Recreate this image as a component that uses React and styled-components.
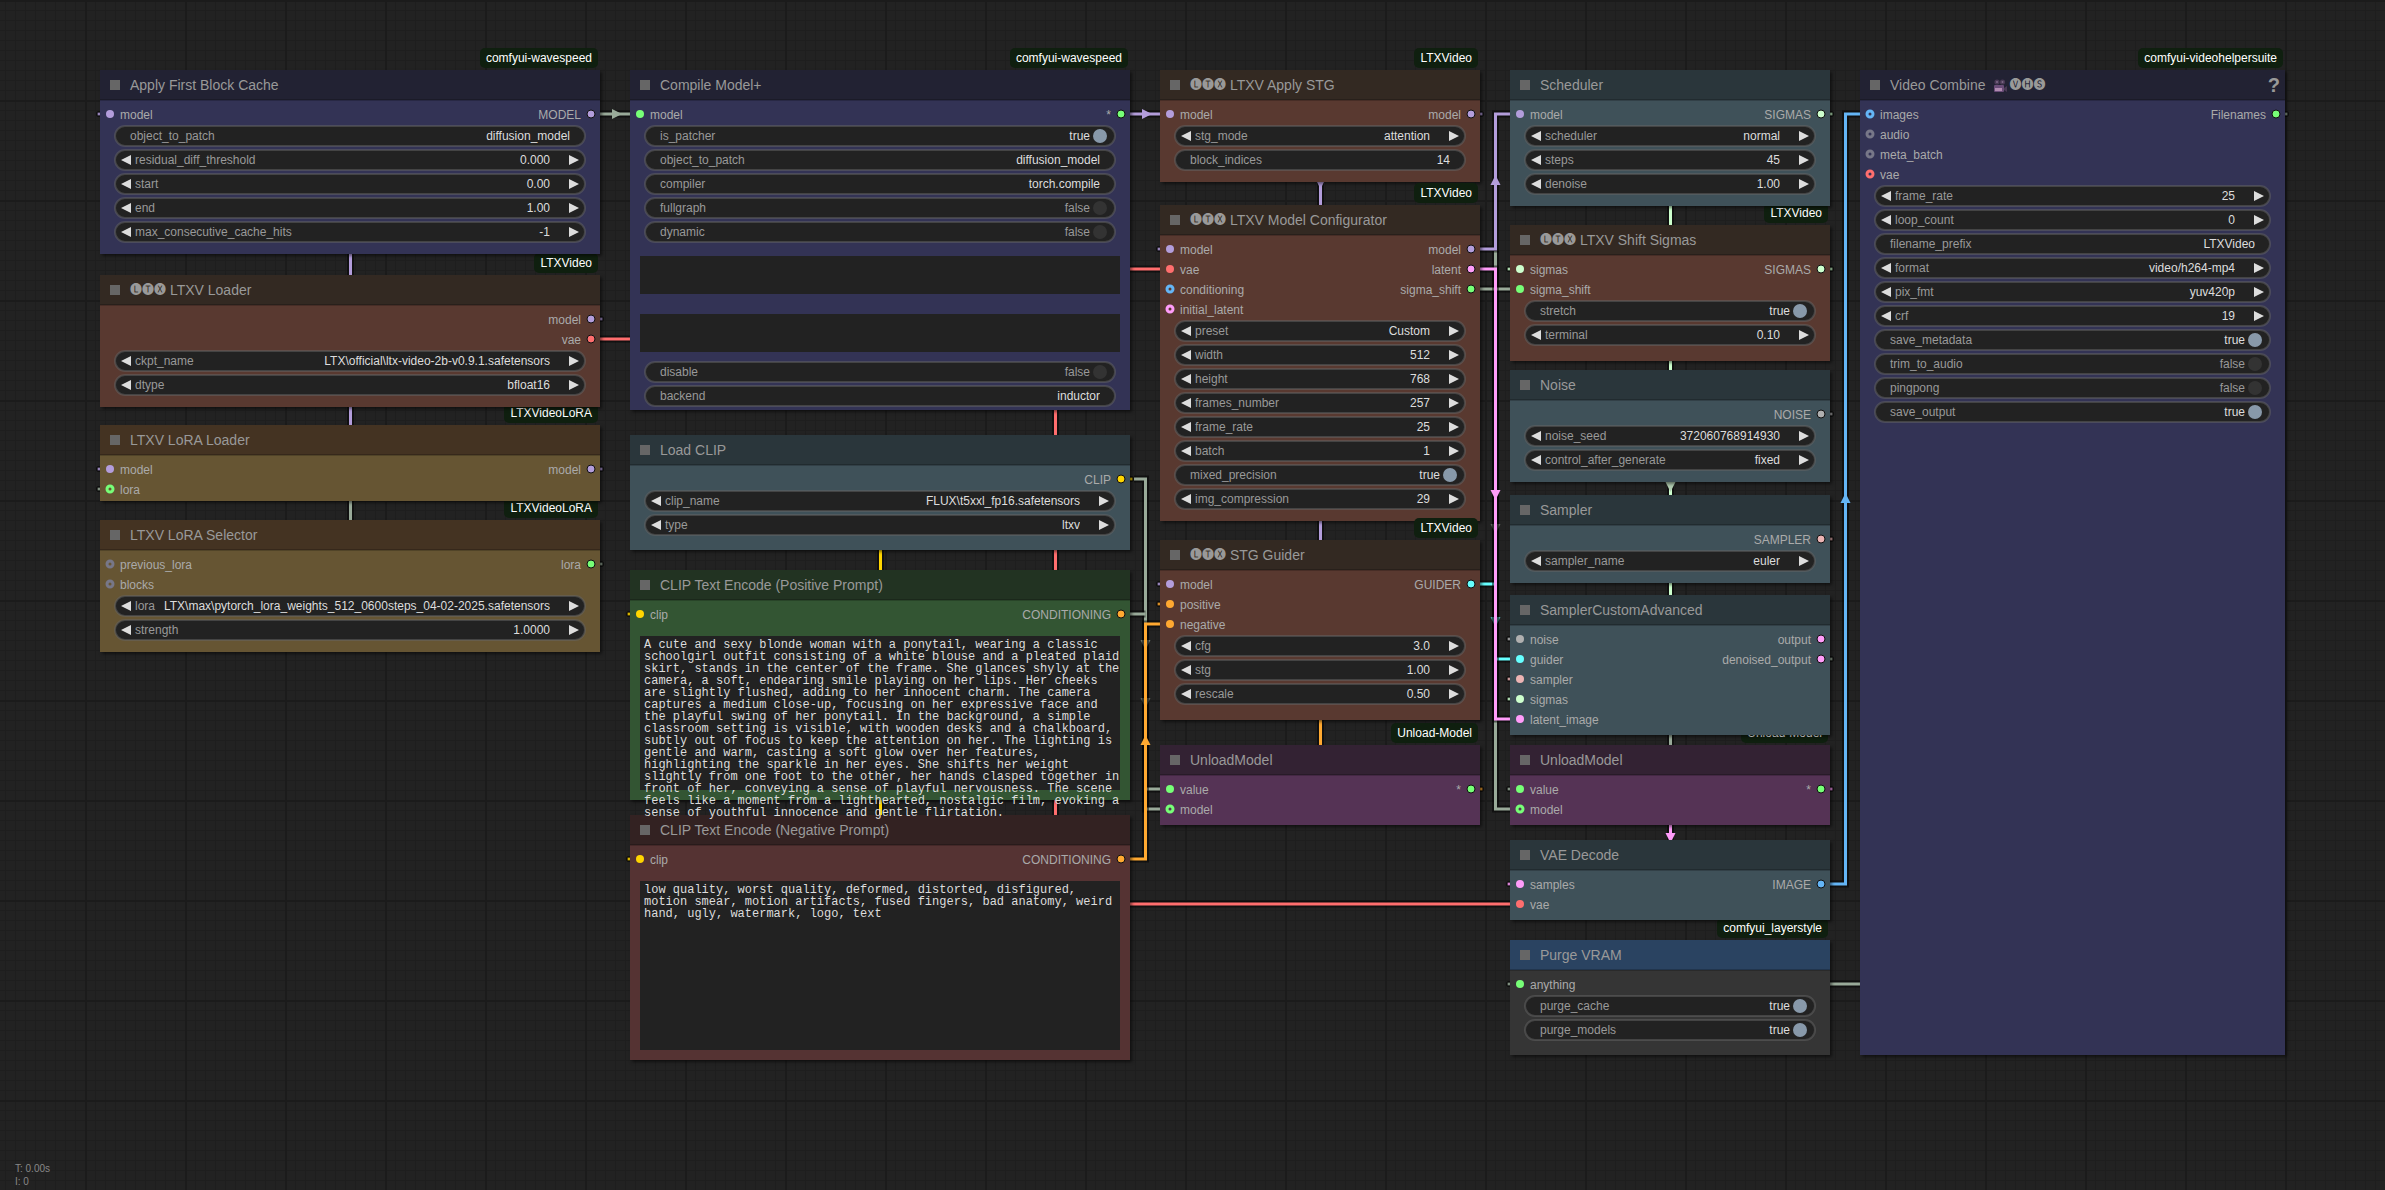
import React, { useId, useState } from "react";
import styled, { createGlobalStyle } from "styled-components";

const sans = `"Liberation Sans", Arial, "Noto Sans CJK JP", sans-serif`;

const Global = createGlobalStyle`
  * { box-sizing: border-box; }
  html, body { margin: 0; background: #222; }
  body { font-family: ${sans}; font-size: 12px; }
  input, select, textarea, button {
    margin: 0; padding: 0; border: 0; outline: 0; background: none; font: inherit; color: inherit;
  }
`;

const C = {
  model: "#b39ddb",
  vae: "#ff6e6e",
  clip: "#ffd500",
  cond: "#ffa931",
  latent: "#ff9cf9",
  image: "#64b5f6",
  sigmas: "#cdffcd",
  guider: "#66ffff",
  sampler: "#ecb4b4",
  noise: "#b0b0b0",
  any: "#77ff77",
  off: "#777788",
  link: "#99aa99",
};

const themes = {
  blue: ["#222233", "#333355"],
  brown: ["#332922", "#593930"],
  yellow: ["#443322", "#665533"],
  slate: ["#2a363b", "#3f5159"],
  green: ["#223322", "#335533"],
  red: ["#332222", "#553333"],
  purple: ["#332233", "#553355"],
  plain: ["#2a4361", "#353535"],
};

/* ---------- canvas ---------- */

const Canvas = styled.main`
  position: relative;
  width: 100%;
  min-height: 100vh;
  overflow: hidden;
  background-color: #222;
  background-image:
    linear-gradient(90deg, #1b1b1b 2px, transparent 2px),
    linear-gradient(#1b1b1b 2px, transparent 2px),
    linear-gradient(90deg, #1e1e1e 1px, transparent 1px),
    linear-gradient(#1e1e1e 1px, transparent 1px);
  background-size: 100px 100px, 100px 100px, 10px 10px, 10px 10px;
  background-position: 85px 0, 85px 0, 5px 0, 5px 0;
`;

const Wires = styled.svg`
  position: absolute;
  top: 0;
  left: 0;
  width: 100%;
  height: 100%;
`;

const Stats = styled.footer`
  position: absolute;
  left: 15px;
  bottom: 2px;
  color: #888;
  font-size: 10px;
  line-height: 13px;
`;

/* ---------- node ---------- */

const NodeBox = styled.section`
  position: absolute;
  left: ${(p) => p.$x}px;
  top: ${(p) => p.$y}px;
  width: ${(p) => p.$w}px;
  background: ${(p) => p.$bg};
  box-shadow: 2px 2px 3px rgba(0, 0, 0, 0.5);
`;

const TitleBar = styled.header`
  display: flex;
  align-items: center;
  gap: 10px;
  height: 30px;
  padding: 0 5px 0 10px;
  border-bottom: 1px solid rgba(0, 0, 0, 0.2);
  background: ${(p) => p.$bg};
`;

const Collapse = styled.button`
  width: 10px;
  height: 10px;
  background: #666;
`;

const TitleText = styled.h2`
  display: flex;
  flex: 1;
  margin: 0;
  color: #999;
  font-size: 14px;
  font-weight: 400;
  line-height: 30px;
  white-space: pre;
`;

const Circled = styled.span`
  font-size: 12px;
`;

const CameraIcon = styled.svg`
  width: 14px;
  height: 14px;
  margin: 9px 2px 0 4px;
`;

const Help = styled.button`
  color: #999;
  font-size: 20px;
  font-weight: 700;
  line-height: 30px;
`;

const Badge = styled.span`
  position: absolute;
  top: -22px;
  right: 2px;
  height: 20px;
  padding: 0 6px;
  border-radius: 5px;
  background: #0f1f0f;
  color: #fff;
  font-size: 12px;
  line-height: 20px;
  white-space: nowrap;
`;

const Body = styled.div`
  min-height: ${(p) => p.$h}px;
  padding-top: 4px;
  box-shadow: inset 0 1px 0 rgba(0, 0, 0, 0.2);
`;

const Slots = styled.div`
  display: flex;
  justify-content: space-between;
  padding: 0 4px 0 5px;
`;

const SlotColumn = styled.ul`
  margin: 0;
  padding: 0;
  list-style: none;
`;

const SlotRow = styled.li`
  display: flex;
  flex-direction: ${(p) => (p.$out ? "row-reverse" : "row")};
  align-items: center;
  gap: 5px;
  height: 20px;
`;

const SlotName = styled.span`
  padding-top: 2px;
  color: #aaa;
  line-height: 20px;
`;

const Dot = styled.svg`
  width: 10px;
  height: 10px;
  overflow: visible;
`;

const WidgetList = styled.div`
  display: flex;
  flex-direction: column;
  gap: 4px;
  padding: 2px 15px 0;
`;

const Pill = styled.div`
  display: flex;
  align-items: center;
  height: 20px;
  padding: ${(p) => p.$pad};
  border: 1px solid rgba(102, 102, 102, 0.5);
  border-radius: 10px;
  background: #222;
  box-shadow: 0 0 0 1px rgba(102, 102, 102, 0.5);
  line-height: 18px;
`;

const PillLabel = styled.label`
  color: #999;
`;

const Value = styled.input`
  flex: 1;
  min-width: 0;
  height: 18px;
  color: #ddd;
  text-align: right;
`;

const Choice = styled.select`
  appearance: none;
  flex: 1;
  min-width: 0;
  height: 18px;
  color: #ddd;
  text-align: right;
  text-align-last: right;
`;

const ArrowButton = styled.button`
  width: 10px;
  height: 10px;
  margin: ${(p) => (p.$right ? "0 0 0 19px" : "0 4px 0 0")};
  background: #ddd;
  clip-path: ${(p) =>
    p.$right ? "polygon(0 0, 100% 50%, 0 100%)" : "polygon(100% 0, 0 50%, 100% 100%)"};
`;

const ToggleText = styled.span`
  margin-left: auto;
  color: ${(p) => (p.$on ? "#ddd" : "#999")};
`;

const Toggle = styled.input`
  appearance: none;
  width: 14px;
  height: 14px;
  margin-left: 3px;
  border-radius: 50%;
  background: #333;
  &:checked { background: #8899aa; }
`;

const TextPanel = styled.div`
  height: ${(p) => p.$h}px;
  margin: 10px -5px 6px;
  background: #222;
`;

const Prompt = styled.textarea`
  display: block;
  width: 100%;
  height: ${(p) => p.$h}px;
  padding: 3px 0 0 4px;
  overflow: hidden;
  resize: none;
  color: #ddd;
  font-family: "Liberation Mono", monospace;
  font-size: 12px;
  line-height: 12px;
`;

/* ---------- parts ---------- */

function Slot({ slot, out }) {
  const [name, color, ring] = slot;
  return (
    <SlotRow $out={out}>
      <Dot viewBox="0 0 10 10" aria-hidden="true">
        {ring ? (
          <circle cx="5" cy="5" r="3" fill="none" stroke={color} strokeWidth="3" />
        ) : (
          <circle cx="5" cy="5" r="4" fill={color} stroke={out ? "#111" : "none"} />
        )}
      </Dot>
      <SlotName>{name}</SlotName>
    </SlotRow>
  );
}

function ToggleWidget({ name, initial }) {
  const id = useId();
  const [on, setOn] = useState(initial);
  return (
    <Pill $pad="0 7px 0 14px">
      <PillLabel htmlFor={id}>{name}</PillLabel>
      <ToggleText $on={on}>{String(on)}</ToggleText>
      <Toggle id={id} type="checkbox" checked={on} onChange={() => setOn(!on)} />
    </Pill>
  );
}

function Widget({ spec }) {
  const id = useId();
  const [kind, name, value, extra] = spec;
  if (kind === "area") {
    return (
      <TextPanel $h={value}>
        <Prompt $h={extra || value} aria-label={name} spellCheck={false} defaultValue={spec[4]} />
      </TextPanel>
    );
  }
  if (kind === "bool") return <ToggleWidget name={name} initial={value} />;
  if (kind === "text") {
    return (
      <Pill $pad="0 14px">
        <PillLabel htmlFor={id}>{name}</PillLabel>
        <Value id={id} defaultValue={value} />
      </Pill>
    );
  }
  return (
    <Pill $pad="0 5px">
      <ArrowButton type="button" aria-label={`previous ${name}`} />
      <PillLabel htmlFor={id}>{name}</PillLabel>
      {kind === "pick" ? (
        <Choice id={id}>
          <option>{value}</option>
        </Choice>
      ) : (
        <Value id={id} inputMode="decimal" defaultValue={value} />
      )}
      <ArrowButton type="button" $right aria-label={`next ${name}`} />
    </Pill>
  );
}

function Camera() {
  return (
    <CameraIcon viewBox="0 0 14 14" aria-hidden="true">
      <circle cx="4" cy="3" r="2.6" fill="#4a3a55" />
      <circle cx="9.5" cy="3" r="2.6" fill="#4a3a55" />
      <circle cx="4" cy="3" r="1" fill="#7d6a88" />
      <circle cx="9.5" cy="3" r="1" fill="#7d6a88" />
      <rect x="1" y="6" width="10" height="7" rx="1" fill="#6a4d78" />
      <rect x="2" y="9" width="7" height="3" fill="#b08ab0" />
      <path d="M11 9l3-2v6l-3-2z" fill="#4a3a55" />
    </CameraIcon>
  );
}

function Node({ x, y, w, h, theme, title, badge, ins = [], outs = [], widgets = [], ltx, vhs }) {
  const [head, body] = themes[theme];
  return (
    <NodeBox $x={x} $y={y} $w={w} $bg={body}>
      {badge && <Badge>{badge}</Badge>}
      <TitleBar $bg={head}>
        <Collapse type="button" aria-label={`Collapse ${title}`} />
        <TitleText>
          {ltx && <Circled>🅛🅣🅧</Circled>}
          {title}
          {vhs && <Camera />}
          {vhs && <Circled>🅥🅗🅢</Circled>}
        </TitleText>
        {vhs && <Help type="button">?</Help>}
      </TitleBar>
      <Body $h={h - 30}>
        <Slots>
          <SlotColumn>{ins.map((s) => <Slot key={s[0]} slot={s} />)}</SlotColumn>
          <SlotColumn>{outs.map((s) => <Slot key={s[0]} slot={s} out />)}</SlotColumn>
        </Slots>
        <WidgetList>{widgets.map((s, i) => <Widget key={i} spec={s} />)}</WidgetList>
      </Body>
    </NodeBox>
  );
}

/* ---------- data ---------- */

const positive =
  "A cute and sexy blonde woman with a ponytail, wearing a classic schoolgirl outfit consisting of a white blouse and a pleated plaid skirt, stands in the center of the frame. She glances shyly at the camera, a soft, endearing smile playing on her lips. Her cheeks are slightly flushed, adding to her innocent charm. The camera captures a medium close-up, focusing on her expressive face and the playful swing of her ponytail. In the background, a simple classroom setting is visible, with wooden desks and a chalkboard, subtly out of focus to keep the attention on her. The lighting is gentle and warm, casting a soft glow over her features, highlighting the sparkle in her eyes. She shifts her weight slightly from one foot to the other, her hands clasped together in front of her, conveying a sense of playful nervousness. The scene feels like a moment from a lighthearted, nostalgic film, evoking a sense of youthful innocence and gentle flirtation.";
const negative =
  "low quality, worst quality, deformed, distorted, disfigured, motion smear, motion artifacts, fused fingers, bad anatomy, weird hand, ugly, watermark, logo, text";

// Listed from back to front, so a later node covers the badge of an earlier one.
const nodes = [
  { x: 100, y: 520, w: 500, h: 132, theme: "yellow", title: "LTXV LoRA Selector", badge: "LTXVideoLoRA",
    ins: [["previous_lora", C.off, 1], ["blocks", C.off, 1]], outs: [["lora", C.any]],
    widgets: [["pick", "lora", "LTX\\max\\pytorch_lora_weights_512_0600steps_04-02-2025.safetensors"], ["num", "strength", "1.0000"]] },
  { x: 100, y: 425, w: 500, h: 76, theme: "yellow", title: "LTXV LoRA Loader", badge: "LTXVideoLoRA",
    ins: [["model", C.model], ["lora", C.any, 1]], outs: [["model", C.model]] },
  { x: 100, y: 275, w: 500, h: 132, theme: "brown", ltx: true, title: " LTXV Loader", badge: "LTXVideo",
    outs: [["model", C.model], ["vae", C.vae]],
    widgets: [["pick", "ckpt_name", "LTX\\official\\ltx-video-2b-v0.9.1.safetensors"], ["pick", "dtype", "bfloat16"]] },
  { x: 100, y: 70, w: 500, h: 184, theme: "blue", title: "Apply First Block Cache", badge: "comfyui-wavespeed",
    ins: [["model", C.model]], outs: [["MODEL", C.model]],
    widgets: [["text", "object_to_patch", "diffusion_model"], ["num", "residual_diff_threshold", "0.000"], ["num", "start", "0.00"], ["num", "end", "1.00"], ["num", "max_consecutive_cache_hits", "-1"]] },

  { x: 630, y: 70, w: 500, h: 340, theme: "blue", title: "Compile Model+", badge: "comfyui-wavespeed",
    ins: [["model", C.any]], outs: [["*", C.any]],
    widgets: [["bool", "is_patcher", true], ["text", "object_to_patch", "diffusion_model"], ["text", "compiler", "torch.compile"], ["bool", "fullgraph", false], ["bool", "dynamic", false], ["area", "mode", 38], ["area", "options", 38], ["bool", "disable", false], ["text", "backend", "inductor"]] },
  { x: 630, y: 435, w: 500, h: 115, theme: "slate", title: "Load CLIP", outs: [["CLIP", C.clip]],
    widgets: [["pick", "clip_name", "FLUX\\t5xxl_fp16.safetensors"], ["pick", "type", "ltxv"]] },
  { x: 630, y: 815, w: 500, h: 245, theme: "red", title: "CLIP Text Encode (Negative Prompt)",
    ins: [["clip", C.clip]], outs: [["CONDITIONING", C.cond]], widgets: [["area", "Negative prompt", 169, 0, negative]] },
  { x: 630, y: 570, w: 500, h: 230, theme: "green", title: "CLIP Text Encode (Positive Prompt)",
    ins: [["clip", C.clip]], outs: [["CONDITIONING", C.cond]], widgets: [["area", "Positive prompt", 154, 184, positive]] },

  { x: 1160, y: 70, w: 320, h: 112, theme: "brown", ltx: true, title: " LTXV Apply STG", badge: "LTXVideo",
    ins: [["model", C.model]], outs: [["model", C.model]],
    widgets: [["pick", "stg_mode", "attention"], ["text", "block_indices", "14"]] },
  { x: 1160, y: 205, w: 320, h: 316, theme: "brown", ltx: true, title: " LTXV Model Configurator", badge: "LTXVideo",
    ins: [["model", C.model], ["vae", C.vae], ["conditioning", C.image, 1], ["initial_latent", C.latent, 1]],
    outs: [["model", C.model], ["latent", C.latent], ["sigma_shift", C.any]],
    widgets: [["pick", "preset", "Custom"], ["num", "width", "512"], ["num", "height", "768"], ["num", "frames_number", "257"], ["num", "frame_rate", "25"], ["num", "batch", "1"], ["bool", "mixed_precision", true], ["num", "img_compression", "29"]] },
  { x: 1160, y: 540, w: 320, h: 180, theme: "brown", ltx: true, title: " STG Guider", badge: "LTXVideo",
    ins: [["model", C.model], ["positive", C.cond], ["negative", C.cond]], outs: [["GUIDER", C.guider]],
    widgets: [["num", "cfg", "3.0"], ["num", "stg", "1.00"], ["num", "rescale", "0.50"]] },
  { x: 1160, y: 745, w: 320, h: 80, theme: "purple", title: "UnloadModel", badge: "Unload-Model",
    ins: [["value", C.any], ["model", C.any, 1]], outs: [["*", C.any]] },

  { x: 1510, y: 225, w: 320, h: 136, theme: "brown", ltx: true, title: " LTXV Shift Sigmas", badge: "LTXVideo",
    ins: [["sigmas", C.sigmas], ["sigma_shift", C.any]], outs: [["SIGMAS", C.sigmas]],
    widgets: [["bool", "stretch", true], ["num", "terminal", "0.10"]] },
  { x: 1510, y: 70, w: 320, h: 136, theme: "slate", title: "Scheduler",
    ins: [["model", C.model]], outs: [["SIGMAS", C.sigmas]],
    widgets: [["pick", "scheduler", "normal"], ["num", "steps", "45"], ["num", "denoise", "1.00"]] },
  { x: 1510, y: 370, w: 320, h: 112, theme: "slate", title: "Noise", outs: [["NOISE", C.noise]],
    widgets: [["num", "noise_seed", "372060768914930"], ["pick", "control_after_generate", "fixed"]] },
  { x: 1510, y: 495, w: 320, h: 88, theme: "slate", title: "Sampler", outs: [["SAMPLER", C.sampler]],
    widgets: [["pick", "sampler_name", "euler"]] },
  { x: 1510, y: 745, w: 320, h: 80, theme: "purple", title: "UnloadModel", badge: "Unload-Model",
    ins: [["value", C.any], ["model", C.any, 1]], outs: [["*", C.any]] },
  { x: 1510, y: 595, w: 320, h: 140, theme: "slate", title: "SamplerCustomAdvanced",
    ins: [["noise", C.noise], ["guider", C.guider], ["sampler", C.sampler], ["sigmas", C.sigmas], ["latent_image", C.latent]],
    outs: [["output", C.latent], ["denoised_output", C.latent]] },
  { x: 1510, y: 940, w: 320, h: 115, theme: "plain", title: "Purge VRAM", badge: "comfyui_layerstyle",
    ins: [["anything", C.any]], widgets: [["bool", "purge_cache", true], ["bool", "purge_models", true]] },
  { x: 1510, y: 840, w: 320, h: 80, theme: "slate", title: "VAE Decode",
    ins: [["samples", C.latent], ["vae", C.vae]], outs: [["IMAGE", C.image]] },

  { x: 1860, y: 70, w: 425, h: 985, theme: "blue", title: "Video Combine ", badge: "comfyui-videohelpersuite", vhs: true,
    ins: [["images", C.image, 1], ["audio", C.off, 1], ["meta_batch", C.off, 1], ["vae", C.vae, 1]], outs: [["Filenames", C.any]],
    widgets: [["num", "frame_rate", "25"], ["num", "loop_count", "0"], ["text", "filename_prefix", "LTXVideo"], ["pick", "format", "video/h264-mp4"], ["pick", "pix_fmt", "yuv420p"], ["num", "crf", "19"], ["bool", "save_metadata", true], ["bool", "trim_to_audio", false], ["bool", "pingpong", false], ["bool", "save_output", true]] },
];

// [colour, path, arrows as [x, y, degrees, colour?]]
const wires = [
  [C.model, "M350.5 240V430"],
  [C.link, "M350.5 495V530"],
  [C.link, "M590 114H640", [[617, 114, 0]]],
  [C.model, "M1120 114H1170", [[1147, 114, 0]]],
  [C.vae, "M590 339H640"],
  [C.vae, "M1055.5 400V904H1520"],
  [C.vae, "M1120 269H1170"],
  [C.clip, "M880.5 540V830"],
  [C.link, "M1134 479H1145.5V809H1170", [[1145.5, 645, 90, "#6a736a"], [1145.5, 703, 90, "#5a625a"]]],
  [C.link, "M1120 614H1145.5"],
  [C.link, "M1145.5 789H1170"],
  [C.cond, "M1120 859H1145.5V624H1170", [[1145.5, 740, -90]]],
  [C.model, "M1320.5 170V545", [[1320.5, 184, 90]]],
  [C.cond, "M1320.5 710V750"],
  [C.link, "M1495.5 251V809H1520", [[1495.5, 529, 90, "#5a625a"]]],
  [C.link, "M1470 289H1520"],
  [C.guider, "M1470 584H1495.5V659H1520", [[1495.5, 622, 90, "#48a5a5"]]],
  [C.latent, "M1470 269H1495.5V719H1520", [[1495.5, 495, 90]]],
  [C.model, "M1470 249H1495.5V114H1520", [[1495.5, 180, -90]]],
  [C.sigmas, "M1670.5 200V600", [[1670.5, 487, 90, "#b0cbb0"]]],
  [C.link, "M1670.5 730V750"],
  [C.latent, "M1670.5 820V845", [[1670.5, 838, 90]]],
  [C.image, "M1820 884H1845.5V114H1870", [[1845.5, 498, -90]]],
  [C.link, "M1820 984H1870"],
];

// Link ends that show just outside a node's edge.
const stubs = [
  [99, 114, C.model], [99, 469, C.model], [99, 489, C.link], [601, 319, C.model], [601, 469, C.model], [601, 564, C.link],
  [629, 614, C.clip], [629, 859, C.clip], [1131, 479, C.clip],
  [1159, 249, C.model], [1159, 584, C.model], [1159, 604, C.cond], [1481, 114, C.model], [1481, 789, C.cond],
  [1509, 269, C.sigmas], [1509, 639, C.noise], [1509, 679, C.sampler], [1509, 699, C.sigmas], [1509, 789, C.link],
  [1509, 884, C.latent], [1509, 984, C.link],
  [1831, 114, C.sigmas], [1831, 269, C.sigmas], [1831, 414, C.noise], [1831, 539, C.sampler], [1831, 659, C.link], [1831, 789, C.latent],
  [2286, 114, C.link],
];

export default function App() {
  return (
    <>
      <Global />
      <Canvas>
        <Wires aria-hidden="true">
          {wires.map(([color, d, arrows = []]) => (
            <g key={d} fill="none">
              <path d={d} stroke="#000" strokeOpacity="0.5" strokeWidth="7" />
              <path d={d} stroke={color} strokeWidth="3" />
              {arrows.map(([x, y, deg, tint]) => (
                <path key={y} d="M-5 -5L5 0L-5 5Z" fill={tint || color} transform={`translate(${x} ${y}) rotate(${deg})`} />
              ))}
            </g>
          ))}
          {stubs.map(([x, y, color]) => (
            <circle key={`${x}-${y}`} cx={x} cy={y} r="2" fill={color} stroke="#000" strokeOpacity="0.6" strokeWidth="2" />
          ))}
        </Wires>
        {nodes.map((n) => (
          <Node key={`${n.x}-${n.y}`} {...n} />
        ))}
        <Stats>
          <div>T: 0.00s</div>
          <div>I: 0</div>
        </Stats>
      </Canvas>
    </>
  );
}
